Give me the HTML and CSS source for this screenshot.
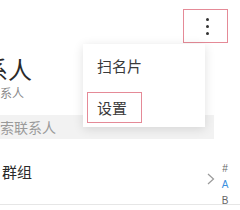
FILE: index.html
```html
<!DOCTYPE html>
<html>
<head>
<meta charset="utf-8">
<link rel="stylesheet" href="styles.css">
</head>
<body>
<div class="page">
  <div class="header">
    <div class="more-btn"><span class="dot"></span><span class="dot"></span><span class="dot"></span></div>
  </div>
  <div class="title">联系人</div>
  <div class="subtitle">联系人</div>
  <div class="search"><span class="search-text">搜索联系人</span></div>
  <div class="group-row">
    <span class="group-text">群组</span>
    <span class="chevron"><svg width="8" height="12" viewBox="0 0 8 12"><path d="M1 1 L6.5 6 L1 11" fill="none" stroke="#9a9a9a" stroke-width="1.2"/></svg></span>
  </div>
  <div class="bottom-line"></div>

  <div class="menu">
    <div class="menu-item">扫名片</div>
    <div class="menu-item"><span class="highlight">设置</span></div>
  </div>

  <div class="index">
    <span>#</span>
    <span class="active">A</span>
    <span>B</span>
  </div>
</div>
</body>
</html>
```

FILE: styles.css
```css
html, body {
  margin: 0;
  padding: 0;
  background: #ffffff;
}
body {
  font-family: "Noto Sans CJK SC", "Noto Sans", sans-serif;
  width: 240px;
  height: 210px;
  overflow: hidden;
}
.page {
  position: relative;
  width: 240px;
  height: 210px;
  overflow: hidden;
  display: flex;
  flex-direction: column;
}
.header {
  display: flex;
  justify-content: flex-end;
  padding-top: 9px;
  padding-right: 12px;
  height: 34px;
}
.more-btn {
  width: 39px;
  height: 32px;
  border: 1px solid #e58a97;
  display: flex;
  flex-direction: column;
  align-items: center;
  justify-content: center;
  gap: 4px;
  padding-left: 4px;
}
.dot {
  width: 3px;
  height: 3px;
  border-radius: 50%;
  background: #333;
}
.title {
  margin-top: 11px;
  margin-left: -40px;
  font-size: 24px;
  line-height: 30px;
  color: #2a2a2a;
  white-space: nowrap;
}
.subtitle {
  margin-top: 1px;
  margin-left: -12px;
  font-size: 12px;
  line-height: 16px;
  color: #8a8a8a;
  white-space: nowrap;
}
.search {
  margin-top: 14px;
  height: 24px;
  background: #f2f2f2;
  display: flex;
  align-items: center;
  width: 214px;
}
.search-text {
  margin-left: -14px;
  font-size: 14px;
  color: #9a9a9a;
  white-space: nowrap;
}
.group-row {
  margin-top: 9px;
  height: 46px;
  display: flex;
  align-items: center;
  justify-content: space-between;
  padding-right: 25px;
}
.group-text {
  margin-left: 2px;
  font-size: 15px;
  color: #2a2a2a;
}
.chevron {
  display: flex;
  margin-top: 16px;
}
.bottom-line {
  margin-top: 10px;
  border-top: 1px solid #e6e6e6;
}
.menu {
  position: absolute;
  left: 83px;
  top: 44px;
  width: 122px;
  height: 83px;
  background: #ffffff;
  box-shadow: 0 2px 10px rgba(0, 0, 0, 0.12);
  display: flex;
  flex-direction: column;
}
.menu-item {
  height: 41px;
  display: flex;
  align-items: center;
  padding-left: 14px;
  font-size: 15px;
  color: #3a3a3a;
  padding-top: 2px;
}
.menu-item .highlight {
  margin-left: -10px;
  width: 44px;
  height: 29px;
  border: 1px solid #e58a97;
  display: flex;
  align-items: center;
  padding-left: 9px;
}
.index {
  position: absolute;
  left: 220px;
  top: 161px;
  width: 10px;
  display: flex;
  flex-direction: column;
  align-items: center;
  font-family: "Liberation Sans", sans-serif;
  font-size: 10px;
  line-height: 16px;
  color: #666;
}
.index .active {
  color: #3b8fe0;
}
```
